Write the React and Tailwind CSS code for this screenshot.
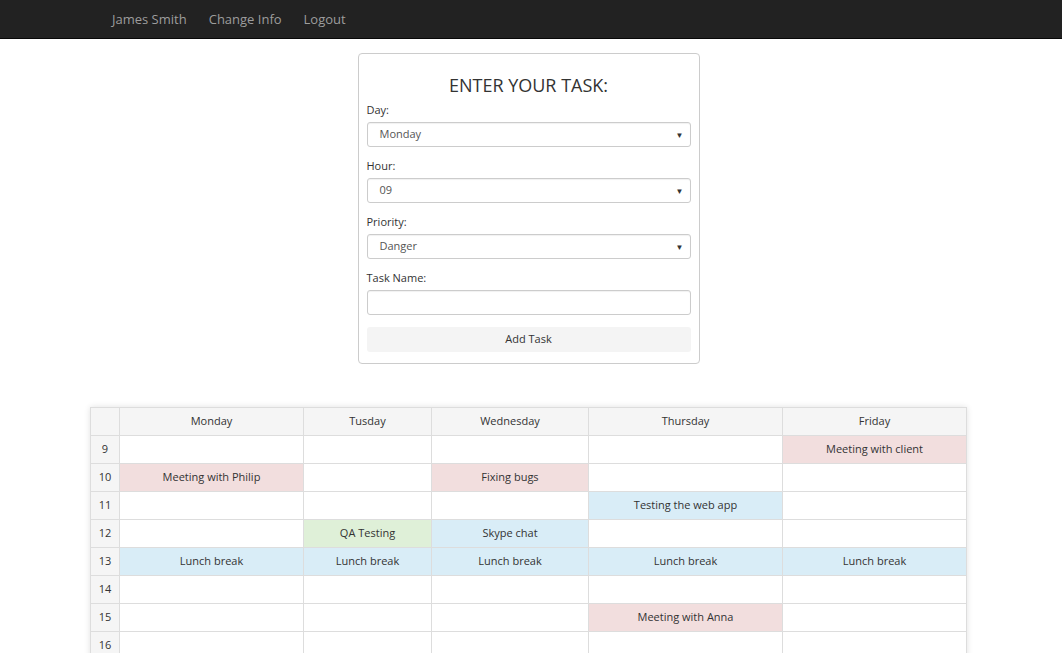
import React from "react";

const font = { fontFamily: '"Open Sans", "Noto Sans", Arial, sans-serif' };

const cols = [
  { name: "", w: "w-[29px]" },
  { name: "Monday", w: "w-[184px]" },
  { name: "Tusday", w: "w-[128px]" },
  { name: "Wednesday", w: "w-[157px]" },
  { name: "Thursday", w: "w-[194px]" },
  { name: "Friday", w: "w-[184px]" },
];

const D = "bg-[#f2dede]";
const I = "bg-[#d9edf7]";
const S = "bg-[#dff0d8]";

const rows = [
  { h: 9, cells: [null, null, null, null, ["Meeting with client", D]] },
  { h: 10, cells: [["Meeting with Philip", D], null, ["Fixing bugs", D], null, null] },
  { h: 11, cells: [null, null, null, ["Testing the web app", I], null] },
  { h: 12, cells: [null, ["QA Testing", S], ["Skype chat", I], null, null] },
  { h: 13, cells: [["Lunch break", I], ["Lunch break", I], ["Lunch break", I], ["Lunch break", I], ["Lunch break", I]] },
  { h: 14, cells: [null, null, null, null, null] },
  { h: 15, cells: [null, null, null, ["Meeting with Anna", D], null] },
  { h: 16, cells: [null, null, null, null, null] },
  { h: 17, cells: [null, null, null, null, null] },
];

function Select({ value }) {
  return (
    <div className="h-[25px] w-full rounded-[3px] border border-[#ccc] bg-white flex items-center justify-between pl-[12px] pr-[6px] text-[11px] text-[#555] shadow-[inset_0_1px_1px_rgba(0,0,0,0.06)]">
      <span>{value}</span>
      <span className="text-[8px] text-[#333]">▼</span>
    </div>
  );
}

function Field({ label, children, first }) {
  return (
    <div className={first ? "" : "mt-[11px]"}>
      <div className="h-[16px] leading-[16px] text-[11px] text-[#333] mb-[4px]">{label}</div>
      {children}
    </div>
  );
}

export default function App() {
  return (
    <div style={font} className="min-h-[653px] bg-white text-[#333]">
      <nav className="h-[39px] bg-[#222] border-b border-[#080808] flex items-center pl-[101px]">
        {["James Smith", "Change Info", "Logout"].map((t) => (
          <a key={t} className="px-[11px] text-[13px] text-[#9d9d9d] leading-[36px]">
            {t}
          </a>
        ))}
      </nav>

      <div className="flex justify-center pt-[14px]">
        <div className="-ml-[5px] w-[342px] rounded-[4px] border border-[#ccc] bg-white px-[8px] pt-[19px] pb-[11px]">
          <div className="text-center text-[18px] leading-[24px] text-[#333] mb-[5px]">ENTER YOUR TASK:</div>
          <Field label="Day:" first>
            <Select value="Monday" />
          </Field>
          <Field label="Hour:">
            <Select value="09" />
          </Field>
          <Field label="Priority:">
            <Select value="Danger" />
          </Field>
          <Field label="Task Name:">
            <div className="h-[25px] w-full rounded-[3px] border border-[#ccc] bg-white shadow-[inset_0_1px_1px_rgba(0,0,0,0.06)]" />
          </Field>
          <button className="mt-[12px] h-[25px] w-full rounded-[3px] bg-[#f4f4f4] text-[11px] text-[#333]">Add Task</button>
        </div>
      </div>

      <div className="mt-[43px] ml-[90px] w-[877px] shadow-[0_0_6px_rgba(0,0,0,0.12)]">
        <table className="table-fixed border-collapse w-[877px] text-[11px] text-[#333]">
          <thead>
            <tr className="h-[28px] bg-[#f5f5f5]">
              {cols.map((c, i) => (
                <th key={i} className={`${c.w} border border-[#ddd] font-normal text-center`}>
                  {c.name}
                </th>
              ))}
            </tr>
          </thead>
          <tbody>
            {rows.map((r) => (
              <tr key={r.h} className="h-[28px]">
                <td className="border border-[#ddd] bg-[#f5f5f5] text-center">{r.h}</td>
                {r.cells.map((c, i) => (
                  <td key={i} className={`border border-[#ddd] text-center ${c ? c[1] : "bg-white"}`}>
                    {c ? c[0] : ""}
                  </td>
                ))}
              </tr>
            ))}
          </tbody>
        </table>
      </div>
    </div>
  );
}
